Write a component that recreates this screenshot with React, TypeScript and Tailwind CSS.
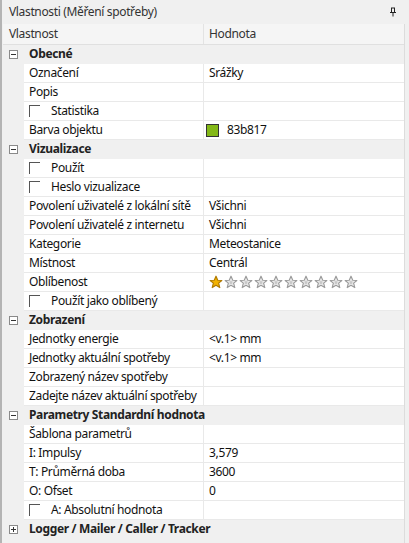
import React from "react"

type Row =
  | { kind: "cat"; label: string; open: boolean }
  | { kind: "prop"; label: string; value?: React.ReactNode; check?: boolean }

const font = { fontFamily: '"Noto Sans", "Open Sans", sans-serif', letterSpacing: "-0.35px" }

function Box({ open }: { open: boolean }) {
  return (
    <svg width="9" height="9" viewBox="0 0 9 9" className="shrink-0">
      <rect x="0.5" y="0.5" width="8" height="8" fill="#fff" stroke="#8a8a8a" />
      <line x1="2" y1="4.5" x2="7" y2="4.5" stroke="#333" />
      {!open && <line x1="4.5" y1="2" x2="4.5" y2="7" stroke="#333" />}
    </svg>
  )
}

function Check() {
  return <span className="mr-[11px] block h-[12px] w-[11px] shrink-0 border-l border-t border-[#555]" />
}

function Star({ gold }: { gold?: boolean }) {
  return (
    <svg width="14" height="14" viewBox="0 0 24 24" className="mr-[1px]">
      <polygon
        points="12,2 15,9 22,9.5 16.5,14 18.5,21.5 12,17.5 5.5,21.5 7.5,14 2,9.5 9,9"
        fill={gold ? "#f2b200" : "#f4f4f4"}
        stroke={gold ? "#b07a00" : "#9a9a9a"}
        strokeWidth="2"
        strokeLinejoin="round"
      />
      {!gold && <polygon points="12,8 13.5,11 16.5,11.3 14,13.3 15,16.5 12,14.8 9,16.5 10,13.3 7.5,11.3 10.5,11" fill="#c8c8c8" />}
    </svg>
  )
}

const rows: Row[] = [
  { kind: "cat", label: "Obecné", open: true },
  { kind: "prop", label: "Označení", value: "Srážky" },
  { kind: "prop", label: "Popis" },
  { kind: "prop", label: "Statistika", check: true },
  {
    kind: "prop",
    label: "Barva objektu",
    value: (
      <span className="flex items-center">
        <span className="mr-[8px] ml-[-3px] block h-[13px] w-[13px] border border-[#333] bg-[#83b817]" />
        83b817
      </span>
    ),
  },
  { kind: "cat", label: "Vizualizace", open: true },
  { kind: "prop", label: "Použít", check: true },
  { kind: "prop", label: "Heslo vizualizace", check: true },
  { kind: "prop", label: "Povolení uživatelé z lokální sítě", value: "Všichni" },
  { kind: "prop", label: "Povolení uživatelé z internetu", value: "Všichni" },
  { kind: "prop", label: "Kategorie", value: "Meteostanice" },
  { kind: "prop", label: "Místnost", value: "Centrál" },
  {
    kind: "prop",
    label: "Oblíbenost",
    value: (
      <span className="flex items-center">
        {[0, 1, 2, 3, 4, 5, 6, 7, 8, 9].map((i) => (
          <Star key={i} gold={i === 0} />
        ))}
      </span>
    ),
  },
  { kind: "prop", label: "Použít jako oblíbený", check: true },
  { kind: "cat", label: "Zobrazení", open: true },
  { kind: "prop", label: "Jednotky energie", value: "<v.1> mm" },
  { kind: "prop", label: "Jednotky aktuální spotřeby", value: "<v.1> mm" },
  { kind: "prop", label: "Zobrazený název spotřeby" },
  { kind: "prop", label: "Zadejte název aktuální spotřeby" },
  { kind: "cat", label: "Parametry Standardní hodnota", open: true },
  { kind: "prop", label: "Šablona parametrů" },
  { kind: "prop", label: "I: Impulsy", value: "3,579" },
  { kind: "prop", label: "T: Průměrná doba", value: "3600" },
  { kind: "prop", label: "O: Ofset", value: "0" },
  { kind: "prop", label: "A: Absolutní hodnota", check: true },
  { kind: "cat", label: "Logger / Mailer / Caller / Tracker", open: false },
]

function GridRow({ row }: { row: Row }) {
  if (row.kind === "cat") {
    return (
      <div className="flex h-[19px] items-center border-b border-[#f0f0f0] bg-[#f0f0f0] pl-[6px]">
        <Box open={row.open} />
        <span className="ml-[11px] whitespace-nowrap font-bold text-[#222]">{row.label}</span>
      </div>
    )
  }
  return (
    <div className="flex h-[19px] bg-[#f0f0f0] pl-[21px]">
      <div className="flex w-[180px] shrink-0 items-center overflow-hidden border-b border-r border-[#e9e9e9] bg-white pl-[5px]">
        {row.check && <Check />}
        <span className="whitespace-nowrap">{row.label}</span>
      </div>
      <div className="flex flex-1 items-center overflow-hidden border-b border-[#e9e9e9] bg-white pl-[5px]">
        <span className="whitespace-nowrap">{row.value}</span>
      </div>
    </div>
  )
}

export default function App() {
  return (
    <div className="flex h-[543px] w-[409px] bg-[#f0f0f0] text-[12px] text-[#111]" style={font}>
      <div className="w-[2px] shrink-0 bg-[#b4b4b4]" />
      <div className="flex min-w-0 flex-1 flex-col">
        <div className="flex h-[24px] shrink-0 items-center justify-between pl-[7px] pr-[12px] text-[#333]">
          <span>Vlastnosti (Měření spotřeby)</span>
          <svg width="8" height="10" viewBox="0 0 8 10">
            <path d="M1 5.5h6M2 1h4M2.5 1v4.5M5.5 1v4.5M4 5.5v4" stroke="#222" strokeWidth="1" fill="none" />
          </svg>
        </div>
        <div className="ml-[1px] mr-[4px] flex flex-1 border-r border-[#dcdcdc]">
          <div className="flex min-w-0 flex-1 flex-col">
            <div className="flex h-[21px] shrink-0 border-b border-[#e0e0e0] bg-[#f5f5f5] text-[#333]">
              <div className="flex w-[201px] items-center border-r border-[#e3e3e3] pl-[6px]">Vlastnost</div>
              <div className="flex flex-1 items-center pl-[5px]">Hodnota</div>
            </div>
            {rows.map((r, i) => (
              <GridRow key={i} row={r} />
            ))}
            <div className="flex-1 bg-[#f0f0f0]" />
          </div>
        </div>
      </div>
    </div>
  )
}
